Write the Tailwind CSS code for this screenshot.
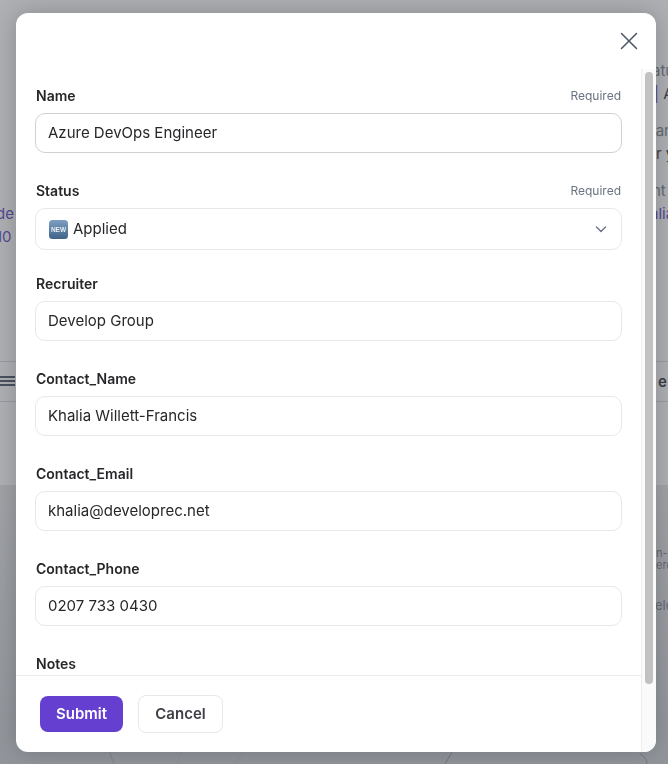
<!DOCTYPE html>
<html lang="en">
<head>
    <meta charset="UTF-8">
    <meta name="viewport" content="width=device-width, initial-scale=1.0">
    <title>Edit application</title>
    <script src="https://cdn.jsdelivr.net/npm/@tailwindcss/browser@4"></script>
</head>

<body class="h-[764px] overflow-hidden bg-white font-['Inter',sans-serif]">

    <!-- page behind the modal -->
    <div class="relative h-[764px] overflow-hidden text-[15px] leading-[23px] text-zinc-900">
        <div class="absolute left-[-4px] top-[202px] text-[#4a2fc0]">de<br>10</div>
        <div class="absolute left-[652px] top-[59px] text-gray-500 whitespace-nowrap">atus</div>
        <div class="absolute left-[654px] top-[82px] whitespace-nowrap"><span class="text-[#4a2fc0]">|</span> A</div>
        <div class="absolute left-[652px] top-[119px] text-gray-500 whitespace-nowrap">lary</div>
        <div class="absolute left-[656px] top-[142px] whitespace-nowrap">r y</div>
        <div class="absolute left-[652px] top-[179px] text-gray-500 whitespace-nowrap">nt</div>
        <div class="absolute left-[650px] top-[202px] text-[#4a2fc0] whitespace-nowrap">alia</div>
        <div class="absolute left-0 top-[361px] w-full h-[41px] border-y border-gray-300"></div>
        <div class="absolute left-0 top-[376px] w-[15px] flex flex-col gap-[2px]">
            <div class="h-[2px] bg-gray-700"></div>
            <div class="h-[2px] bg-gray-700"></div>
            <div class="h-[2px] bg-gray-700"></div>
        </div>
        <div class="absolute left-[658px] top-[370px] font-semibold">e</div>
        <div class="absolute left-0 top-[485px] w-full h-[279px] bg-gradient-to-b from-[#e4e4e4] to-[#c6cacd]"></div>
        <div class="absolute left-[656px] top-[547px] text-[11px] leading-[12px] text-gray-500">n-i<br>erd</div>
        <div class="absolute left-[655px] top-[594px] text-[13px] text-gray-500">ele</div>
        <svg class="absolute left-0 top-[740px] w-[668px] h-6" viewBox="0 0 668 24" fill="none" stroke-width="1">
            <path d="M110 12c1 5 3 9 4 12" stroke="#a4a9ae"/>
            <path d="M182 12c-2 4-3 8-5 12" stroke="#bcc0c4"/>
            <path d="M243 12c-3 4-5 8-7 12" stroke="#bcc0c4"/>
            <path d="M452 12l-7 12" stroke="#8a9096"/>
            <path d="M640 14c4 2 7 6 7 10" stroke="#8a9096"/>
        </svg>
    </div>

    <!-- overlay -->
    <div class="fixed inset-0 bg-[#5d6169]/50 backdrop-blur-[0.5px]"></div>

    <!-- modal -->
    <div class="fixed left-4 top-[13px] w-[640px] h-[739px] bg-white rounded-xl overflow-hidden flex flex-col shadow-[0_0_24px_rgba(0,0,0,0.22)]">
        <div class="h-14 shrink-0 flex justify-end items-start pt-[19px] pr-[18.5px]">
            <svg class="w-[18px] h-[18px] text-gray-600" viewBox="0 0 18 18" fill="none" stroke="currentColor" stroke-width="1.5" stroke-linecap="round"><path d="M1.5 1.5l15 15M16.5 1.5l-15 15"/></svg>
        </div>

        <div class="flex-1 min-h-0 flex">
            <div class="w-[625px] flex flex-col">
                <div class="flex-1 min-h-0 overflow-hidden pl-5 pr-[19px] pt-[15px]">

                    <div class="mb-[26px]">
                        <div class="h-6 flex justify-between items-center mb-[5px] pr-px">
                            <span class="text-sm font-semibold text-zinc-800">Name</span>
                            <span class="text-xs text-gray-500">Required</span>
                        </div>
                        <div class="-ml-px h-10 border border-[#d0d0d0] rounded-[10px] px-3 flex items-center text-[15px] text-zinc-800">Azure DevOps Engineer</div>
                    </div>

                    <div class="mb-[22px]">
                        <div class="h-6 flex justify-between items-center mb-[5px] pr-px">
                            <span class="text-sm font-semibold text-zinc-800">Status</span>
                            <span class="text-xs text-gray-500">Required</span>
                        </div>
                        <div class="-ml-px h-[42px] border border-[#e8e8e8] rounded-[10px] pl-3 pr-[14px] flex items-center justify-between text-[15px] text-zinc-800">
                            <span class="flex items-center gap-[5px]">
                                <svg class="w-[19px] h-[19px] ml-px" viewBox="0 0 19 19">
                                    <defs><linearGradient id="newBadge" x1="0" y1="0" x2="0" y2="1"><stop offset="0" stop-color="#7d9fc2"/><stop offset="1" stop-color="#3f6488"/></linearGradient></defs>
                                    <rect width="19" height="19" rx="3.5" fill="url(#newBadge)"/>
                                    <text x="9.5" y="12" text-anchor="middle" font-size="6.5" font-weight="700" fill="#e8eef4" font-family="Liberation Sans, sans-serif">NEW</text>
                                </svg>
                                Applied
                            </span>
                            <svg class="w-3 h-3 text-gray-500" viewBox="0 0 12 12" fill="none" stroke="currentColor" stroke-width="1.4" stroke-linecap="round" stroke-linejoin="round"><path d="M1.5 4l4.5 4.5L10.5 4"/></svg>
                        </div>
                    </div>

                    <div class="mb-[26px]">
                        <div class="h-6 flex items-center mb-[5px]"><span class="text-sm font-semibold text-zinc-800">Recruiter</span></div>
                        <div class="-ml-px h-10 border border-[#e8e8e8] rounded-[10px] px-3 flex items-center text-[15px] text-zinc-800">Develop Group</div>
                    </div>

                    <div class="mb-[26px]">
                        <div class="h-6 flex items-center mb-[5px]"><span class="text-sm font-semibold text-zinc-800">Contact_Name</span></div>
                        <div class="-ml-px h-10 border border-[#e8e8e8] rounded-[10px] px-3 flex items-center text-[15px] text-zinc-800">Khalia Willett-Francis</div>
                    </div>

                    <div class="mb-[26px]">
                        <div class="h-6 flex items-center mb-[5px]"><span class="text-sm font-semibold text-zinc-800">Contact_Email</span></div>
                        <div class="-ml-px h-10 border border-[#e8e8e8] rounded-[10px] px-3 flex items-center text-[15px] text-zinc-800">khalia@developrec.net</div>
                    </div>

                    <div class="mb-[26px]">
                        <div class="h-6 flex items-center mb-[5px]"><span class="text-sm font-semibold text-zinc-800">Contact_Phone</span></div>
                        <div class="-ml-px h-10 border border-[#e8e8e8] rounded-[10px] px-3 flex items-center text-[15px] text-zinc-800">0207 733 0430</div>
                    </div>

                    <div class="h-6 flex items-center"><span class="text-sm font-semibold text-zinc-800">Notes</span></div>
                </div>

                <div class="h-[77px] shrink-0 border-t border-[#ebebeb] pl-6 flex items-center gap-[15px]">
                    <button class="w-[83px] h-9 rounded-lg bg-[#6540d0] text-white text-[15px] font-semibold">Submit</button>
                    <button class="w-[85px] h-[38px] rounded-lg border border-[#e8e8e8] text-zinc-700 text-[15px] font-semibold">Cancel</button>
                </div>
            </div>

            <!-- scrollbar -->
            <div class="w-[15px] border-l border-[#ededed] bg-[#fafafa] pl-[3px] pt-[3px]">
                <div class="w-2 h-[612px] rounded-full bg-[#c1c1c1]"></div>
            </div>
        </div>
    </div>

</body>
</html>
